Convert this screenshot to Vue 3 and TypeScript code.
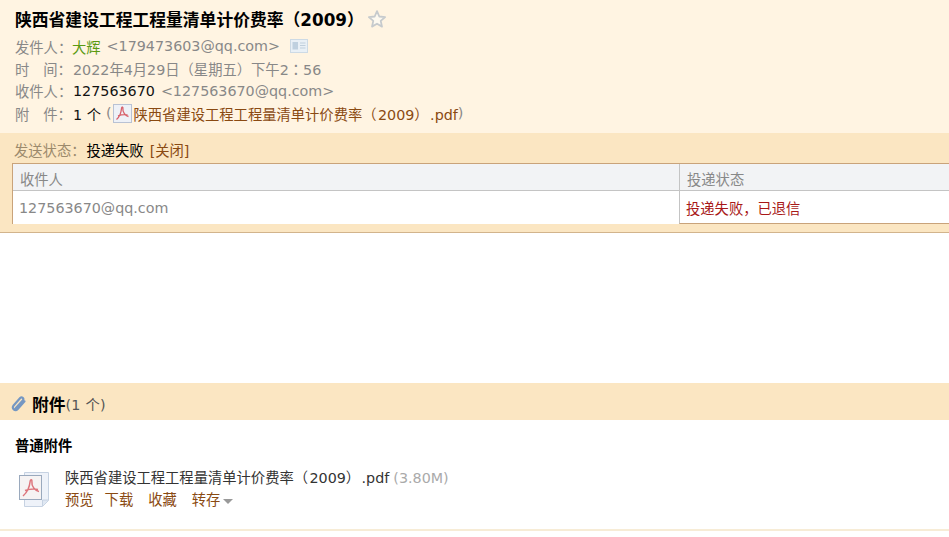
<template>
  <div class="mail">
    <header class="head">
      <h1 class="subject">
        <span>{{ subject }}</span>
        <svg class="star" width="20" height="20" viewBox="0 0 20 20">
          <path d="M10 2.200l2.300 5.300 5.800.6-4.400 3.800 1.300 5.700L10 14.700l-5 2.900 1.300-5.700-4.400-3.800 5.800-.6z" fill="#fdf9f0" stroke="#c6cacd" stroke-width="1.800" stroke-linejoin="round" />
        </svg>
      </h1>
      <div class="meta">
        <div class="row">
          <span class="label">发件人：</span><span class="sender">大辉</span><span class="addr">&lt;179473603@qq.com&gt;</span>
          <svg class="card" width="18" height="14" viewBox="0 0 18 14">
            <rect x="0.5" y="0.5" width="17" height="13" fill="#e9f0f6" stroke="#cddae5" />
            <rect x="2.500" y="3" width="5.500" height="7.500" fill="#bfd0df" />
            <path d="M10 4h5.500M10 6.500h5.500M10 9h5.500" stroke="#c0cfdc" />
          </svg>
        </div>
        <div class="row">
          <span class="label">时<i class="gap"></i>间：</span><span class="muted">2022年4月29日（星期五）下午2<span class="colon">：</span>56</span>
        </div>
        <div class="row">
          <span class="label">收件人：</span><span class="dark">127563670</span><span class="addr">&lt;127563670@qq.com&gt;</span>
        </div>
        <div class="row">
          <span class="label">附<i class="gap"></i>件：</span><span class="dark">1 个</span><span class="paren">(</span>
          <svg class="pdf" width="19" height="19" viewBox="0 0 19 19">
            <rect x="0.5" y="0.5" width="18" height="18" fill="#eef1f7" stroke="#b9c2d4" />
            <path d="M3.500 15.500C6 13.500 8 9.500 8.600 4c.3-1.500 1.600-1.200 1.300.3-.5 3.500 2.500 7.700 5.600 8.200M5 11.800c3-1 6.500-1.500 9.500-.8" fill="none" stroke="#d8606a" stroke-width="1.300" />
          </svg>
          <a class="link">{{ fileName }}</a><span class="paren close">)</span>
        </div>
      </div>
    </header>

    <section class="status">
      <div class="status-line">
        <span class="status-label">发送状态：</span><span class="status-text">投递失败</span><a class="link">[关闭]</a>
      </div>
      <div class="table">
        <div class="cell th">收件人</div>
        <div class="cell th side">投递状态</div>
        <div class="cell td">127563670@qq.com</div>
        <div class="cell td side fail">投递失败，已退信</div>
      </div>
    </section>

    <div class="blank"></div>

    <section class="attach">
      <div class="attach-title">
        <svg width="16" height="18" viewBox="0 0 16 18">
          <path d="M4.500 13.500 11.800 5.400c1.600-1.900-1-4-2.600-2.300L2.600 10.500c-2.500 2.900 1.500 6.200 4.100 3.400l6.800-7.600" fill="none" stroke="#7597c2" stroke-width="2.200" stroke-linecap="round" />
        </svg>
        <strong>附件</strong><span class="count">(1 个)</span>
      </div>
      <div class="attach-body">
        <div class="group">普通附件</div>
        <div class="file">
          <svg class="file-icon" width="36" height="38" viewBox="0 0 36 38">
            <path d="M6.500 1.500h24v28l-6 6h-18z" fill="#eef2f9" stroke="#c6d2e2" />
            <path d="M24.500 35v-6h6" fill="#dfe7f2" stroke="#c6d2e2" />
            <rect x="1.500" y="4.500" width="22" height="24" fill="#f6f3f3" stroke="#9aa9bd" />
            <path d="M5 25c3.500-3 6.500-8 7.200-15 .3-2 2-1.600 1.700.4-.6 4.500 3 9.400 7.100 10M7 19.500c4-1.300 9-2 13-1" fill="none" stroke="#dd757c" stroke-width="1.500" />
          </svg>
          <div>
            <div class="file-name">{{ fileName }}<span class="size">(3.80M)</span></div>
            <div class="actions">
              <a class="link">预览</a><a class="link">下载</a><a class="link far">收藏</a><a class="link far">转存<i class="caret"></i></a>
            </div>
          </div>
        </div>
      </div>
    </section>
    <div class="foot"></div>
  </div>
</template>

<script setup lang="ts">
const subject = '陕西省建设工程工程量清单计价费率（2009）'
const fileName = '陕西省建设工程工程量清单计价费率（\u200a2009）\u200a.pdf'
</script>

<style>
html,
body {
  background: #fff;
  overflow: hidden;
}
</style>

<style scoped>
.mail {
  width: 949px;
  height: 537px;
  overflow: hidden;
  font-family: "DejaVu Sans", "Noto Sans CJK SC", sans-serif;
  font-size: 14.3px;
  color: #000;
}

.head {
  height: 133px;
  box-sizing: border-box;
  padding: 7px 15px 0;
  background: #fff4e2;
}

.subject {
  display: flex;
  align-items: center;
  margin: 0;
  height: 24px;
  font-size: 16.8px;
  font-weight: bold;
  color: #000;
}

.star {
  margin-left: 3px;
}

.meta {
  margin-top: 4px;
}

.row {
  display: flex;
  align-items: center;
  height: 22.3px;
  white-space: nowrap;
}

.label {
  width: 58px;
  color: #888;
}

.gap {
  display: inline-block;
  width: 14px;
}

.colon {
  font-family: "Noto Sans CJK TC", sans-serif;
}

.sender {
  margin-left: -1px;
  color: #5a9a10;
}

.addr {
  margin-left: 6px;
  color: #888;
}

.muted {
  color: #888;
}

.dark {
  color: #111;
}

.paren {
  margin-left: 5px;
  color: #888;
}

.paren.close {
  margin-left: 0;
}

.card {
  margin-left: 10px;
}

.pdf {
  margin-left: 1px;
  margin-right: 2px;
}

.link {
  color: #8a4a12;
}

.status {
  height: 100px;
  box-sizing: border-box;
  padding-top: 6px;
  padding-left: 12px;
  background: #fbe6c2;
  border-bottom: 1px solid #d2b48c;
}

.status-line {
  display: flex;
  align-items: center;
  height: 20px;
  padding-left: 2px;
  margin-bottom: 4px;
}

.status-label {
  margin-right: 1px;
  color: #9c8a6c;
}

.status-text {
  margin-right: 6px;
}

.table {
  display: grid;
  grid-template-columns: 666px 1fr;
  grid-template-rows: 27px 33px;
  border-top: 1px solid #c9a37a;
  border-left: 1px solid #c9a37a;
}

.cell {
  display: flex;
  align-items: center;
}

.th {
  padding-left: 7px;
  padding-top: 2px;
  box-sizing: border-box;
  color: #888;
  background: #f2f3f5;
  border-bottom: 1px solid #c4c4c4;
}

.td {
  padding-left: 6px;
  color: #888;
  background: #fff;
}

.side {
  border-left: 1px solid #c4c4c4;
  padding-left: 7px;
}

.fail {
  padding-left: 6px;
  color: #a81818;
  border-bottom: 1px solid #c9a37a;
}

.blank {
  height: 150px;
}

.attach-title {
  display: flex;
  align-items: center;
  height: 37px;
  padding-top: 4px;
  box-sizing: border-box;
  padding-left: 11px;
  background: #fbe6c2;
}

.attach-title svg {
  margin-top: 0;
}

.attach-title strong {
  margin-left: 5px;
  font-size: 16.8px;
}

.count {
  letter-spacing: 0.2px;
  color: #555;
}

.attach-body {
  height: 109px;
  box-sizing: border-box;
  padding: 14px 15px 0;
}

.group {
  font-weight: bold;
}

.file {
  display: flex;
  margin-top: 11px;
  padding-left: 3px;
}

.file-icon {
  margin-right: 11px;
  margin-top: 5px;
}

.file-name {
  color: #333;
}

.size {
  margin-left: 4px;
  color: #aaa;
}

.actions {
  display: flex;
  gap: 11px;
  margin-top: 1px;
}

.far {
  margin-left: 4px;
}

.caret {
  display: inline-block;
  margin-left: 3px;
  border: 5px solid transparent;
  border-top-color: #999;
  border-bottom: 0;
  vertical-align: middle;
}

.foot {
  height: 2px;
  background: #f7ecd6;
}
</style>
